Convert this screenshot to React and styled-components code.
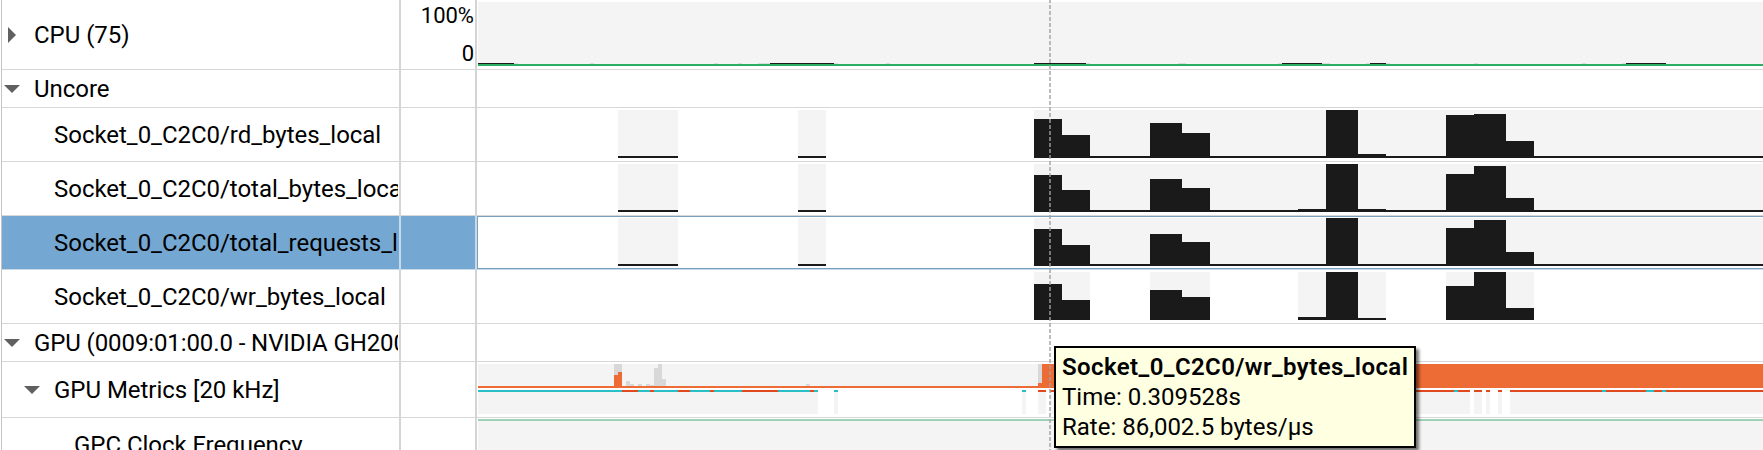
import React from 'react';
import styled, { createGlobalStyle } from 'styled-components';

const Global = createGlobalStyle`
  * { box-sizing: border-box; }
  body { margin: 0; background: #fff; overflow: hidden; }
`;

const Timeline = styled.main`
  position: relative;
  width: 1763px;
  height: 450px;
  overflow: hidden;
  padding-left: 2px;
  background: linear-gradient(90deg, #fff 1px, #c4c4c4 1px, #c4c4c4 2px, #fff 2px);
  font-family: Roboto, "Liberation Sans", sans-serif;
  font-size: 24px;
  color: #000;
`;

const Row = styled.div`
  display: flex;
  height: ${(p) => p.$height}px;
`;

const NameCell = styled.div`
  display: flex;
  align-items: center;
  width: 399px;
  flex: none;
  padding-left: ${(p) => 1 + p.$level * 20}px;
  padding-right: 1px;
  border-right: 2px solid ${(p) => (p.$selected ? '#c9d9e8' : '#d4d4d4')};
  border-bottom: 1px solid ${(p) => (p.$selected ? '#c9d9e8' : '#d7d7d7')};
  background: ${(p) => (p.$selected ? '#74a8d3' : '#fff')};
`;

const ArrowSlot = styled.span`
  display: flex;
  flex: none;
  width: 31px;
`;

const Label = styled.span`
  flex: 1;
  min-width: 0;
  overflow: hidden;
  white-space: nowrap;
  line-height: 32px;
  letter-spacing: ${(p) => (p.$tight ? -0.1 : -0.03)}px;
`;

const ScaleCell = styled.div`
  display: flex;
  flex-direction: column;
  justify-content: space-between;
  align-items: flex-end;
  width: 76px;
  flex: none;
  padding: 4px 1px 3px 0;
  font-size: 22px;
  line-height: 24px;
  border-right: 2px solid ${(p) => (p.$selected ? '#c9d9e8' : '#d4d4d4')};
  border-bottom: 1px solid ${(p) => (p.$selected ? '#c9d9e8' : '#d7d7d7')};
  background: ${(p) => (p.$selected ? '#74a8d3' : '#fff')};
`;

const ChartCell = styled.div`
  flex: 1;
  padding-left: 1px;
  border-bottom: 1px solid ${(p) => (p.$selected ? '#c9d9e8' : '#d7d7d7')};
  box-shadow: ${(p) => (p.$selected ? 'inset 1px 1px #7ba0bd, inset 0 -1px #7ba0bd' : 'none')};
`;

const Plot = styled.svg`
  display: block;
  shape-rendering: crispEdges;
`;

const Cursor = styled.div`
  position: absolute;
  left: 1049px;
  top: -1px;
  width: 2px;
  height: 451px;
  background: repeating-linear-gradient(rgba(160, 160, 160, 0.7) 0 4px, transparent 4px 6px);
`;

const Tooltip = styled.div`
  position: absolute;
  left: 1054px;
  top: 346px;
  width: 362px;
  height: 102px;
  padding: 4px 6px;
  border: 2px solid #000;
  background: #ffffe1;
  box-shadow: 3px 3px 3px rgba(0, 0, 0, 0.55);
  line-height: 30px;
  white-space: nowrap;
`;

const TooltipTitle = styled.div`
  font-weight: 600;
  letter-spacing: 0.4px;
`;

const INK = '#1a1a1a';
const TRACK = '#f4f4f4';
const ORANGE = '#ed6b35';
const RED = '#e1491f';
const CYAN = '#28bfc6';
const ORIGIN = 478;
const END = 1763;

function Arrow({ open }) {
  return open ? (
    <svg width="18" height="10" viewBox="0 0 18 10"><path d="M1 1H17L9 9Z" fill="#606060" /></svg>
  ) : (
    <svg width="18" height="16" viewBox="0 0 18 16"><path d="M5 0V16L13 8Z" fill="#606060" /></svg>
  );
}

const Bar = ({ from, to, top, bottom, fill }) => (
  <rect x={from} y={top} width={to - from} height={bottom - top} fill={fill} />
);

function Canvas({ height, children }) {
  return (
    <Plot width={END - ORIGIN} height={height} viewBox={`${ORIGIN} 0 ${END - ORIGIN} ${height}`}>
      {children}
    </Plot>
  );
}

const cpuBusy = [[478, 514], [770, 834], [1034, 1086], [1282, 1322], [1370, 1386], [1626, 1666]];
const cpuFaint = [
  [514, 518], [590, 594], [714, 718], [738, 742], [758, 770], [834, 838], [886, 890], [1086, 1090],
  [1178, 1186], [1278, 1282], [1322, 1330], [1366, 1370], [1386, 1390], [1474, 1478], [1582, 1586], [1622, 1626],
];

function CpuPlot() {
  return (
    <Canvas height={69}>
      <Bar from={ORIGIN} to={END} top={2} bottom={64} fill={TRACK} />
      {cpuFaint.map(([a, b]) => <Bar key={a} from={a} to={b} top={63} bottom={64} fill="#d5e0d9" />)}
      {cpuBusy.map(([a, b]) => <Bar key={a} from={a} to={b} top={63} bottom={64} fill={INK} />)}
      <Bar from={ORIGIN} to={END} top={64} bottom={66} fill="#2aaf62" />
    </Canvas>
  );
}

const slots = [
  [1034, 1062], [1062, 1090], [1150, 1182], [1182, 1210], [1298, 1326],
  [1326, 1358], [1358, 1386], [1446, 1474], [1474, 1506], [1506, 1534],
];
const fullTracks = [[618, 678], [798, 826], [1034, END]];
const burstTracks = [[1034, 1090], [1150, 1210], [1298, 1386], [1446, 1534]];

function CounterPlot({ values, sparse }) {
  const tracks = sparse ? burstTracks : fullTracks;
  return (
    <Canvas height={53}>
      {tracks.map(([a, b]) => (
        <React.Fragment key={a}>
          <Bar from={a} to={b} top={2} bottom={50} fill={TRACK} />
          <Bar from={a} to={b} top={48} bottom={50} fill={INK} />
        </React.Fragment>
      ))}
      {slots.map(([a, b], i) => <Bar key={a} from={a} to={b} top={50 - values[i]} bottom={50} fill={INK} />)}
    </Canvas>
  );
}

const idle = [
  [614, 622, 2], [626, 630, 19], [630, 634, 22], [638, 642, 22], [646, 650, 22], [650, 654, 23],
  [654, 658, 6], [658, 662, 2], [662, 666, 17], [806, 810, 22], [1038, 1042, 2],
];
const active = [[614, 618, 13], [618, 622, 10], [1038, 1042, 21], [1042, END, 2]];
const smTracks = [
  [478, 818], [834, 838], [1022, 1026], [1038, 1046], [1050, 1470], [1474, 1482], [1486, 1490], [1498, 1502], [1510, END],
];
const smCyan = [[478, 818], [834, 838], [1022, 1026]];
const smRed = [
  [622, 638], [650, 654], [678, 690], [710, 714], [742, 778], [810, 814], [1038, 1046], [1050, 1470],
  [1474, 1482], [1486, 1490], [1498, 1502], [1510, END],
];
const smCyanLate = [[1454, 1458], [1602, 1606], [1646, 1654], [1662, 1666]];

function MetricsPlot() {
  const strip = (list, fill) => list.map(([a, b]) => (
    <Bar key={`${fill}${a}`} from={a} to={b} top={28} bottom={30} fill={fill} />
  ));
  return (
    <Canvas height={55}>
      <Bar from={ORIGIN} to={END} top={2} bottom={26} fill={TRACK} />
      {idle.map(([a, b, y]) => <Bar key={a} from={a} to={b} top={y} bottom={26} fill="#d8d8d8" />)}
      {active.map(([a, b, y]) => <Bar key={a} from={a} to={b} top={y} bottom={26} fill={ORANGE} />)}
      <Bar from={ORIGIN} to={END} top={24} bottom={26} fill={ORANGE} />
      {smTracks.map(([a, b]) => <Bar key={a} from={a} to={b} top={28} bottom={52} fill={TRACK} />)}
      {strip(smCyan, CYAN)}
      {strip(smRed, RED)}
      {strip(smCyanLate, CYAN)}
    </Canvas>
  );
}

function ClockPlot() {
  return (
    <Canvas height={53}>
      <Bar from={ORIGIN} to={END} top={1} bottom={53} fill={TRACK} />
      <Bar from={ORIGIN} to={END} top={1} bottom={3} fill="#9dd2b6" />
    </Canvas>
  );
}

const rows = [
  { name: 'CPU (75)', height: 70, level: 0, arrow: 'closed', scale: ['100%', '0'], plot: <CpuPlot /> },
  { name: 'Uncore', height: 38, level: 0, arrow: 'open' },
  { name: 'Socket_0_C2C0/rd_bytes_local', height: 54, level: 1, plot: <CounterPlot values={[39, 23, 35, 25, 2, 48, 4, 43, 44, 17]} /> },
  { name: 'Socket_0_C2C0/total_bytes_local', height: 54, level: 1, plot: <CounterPlot values={[37, 22, 33, 24, 3, 48, 3, 38, 46, 14]} /> },
  { name: 'Socket_0_C2C0/total_requests_local', height: 54, level: 1, selected: true, plot: <CounterPlot values={[37, 21, 32, 24, 2, 48, 2, 38, 46, 14]} /> },
  { name: 'Socket_0_C2C0/wr_bytes_local', height: 54, level: 1, plot: <CounterPlot sparse values={[36, 20, 30, 23, 3, 48, 2, 34, 48, 12]} /> },
  { name: 'GPU (0009:01:00.0 - NVIDIA GH200)', height: 38, level: 0, arrow: 'open', tight: true },
  { name: 'GPU Metrics [20 kHz]', height: 56, level: 1, arrow: 'open', plot: <MetricsPlot /> },
  { name: 'GPC Clock Frequency', height: 54, level: 2, plot: <ClockPlot /> },
];

export default function App() {
  return (
    <>
      <Global />
      <Timeline>
        {rows.map((r) => (
          <Row key={r.name} $height={r.height}>
            <NameCell $level={r.level} $selected={r.selected}>
              <ArrowSlot>{r.arrow && <Arrow open={r.arrow === 'open'} />}</ArrowSlot>
              <Label $tight={r.tight}>{r.name}</Label>
            </NameCell>
            <ScaleCell $selected={r.selected}>
              {r.scale && r.scale.map((s) => <span key={s}>{s}</span>)}
            </ScaleCell>
            <ChartCell $selected={r.selected}>{r.plot}</ChartCell>
          </Row>
        ))}
        <Cursor />
        <Tooltip>
          <TooltipTitle>Socket_0_C2C0/wr_bytes_local</TooltipTitle>
          <div>Time: 0.309528s</div>
          <div>Rate: 86,002.5 bytes/µs</div>
        </Tooltip>
      </Timeline>
    </>
  );
}
